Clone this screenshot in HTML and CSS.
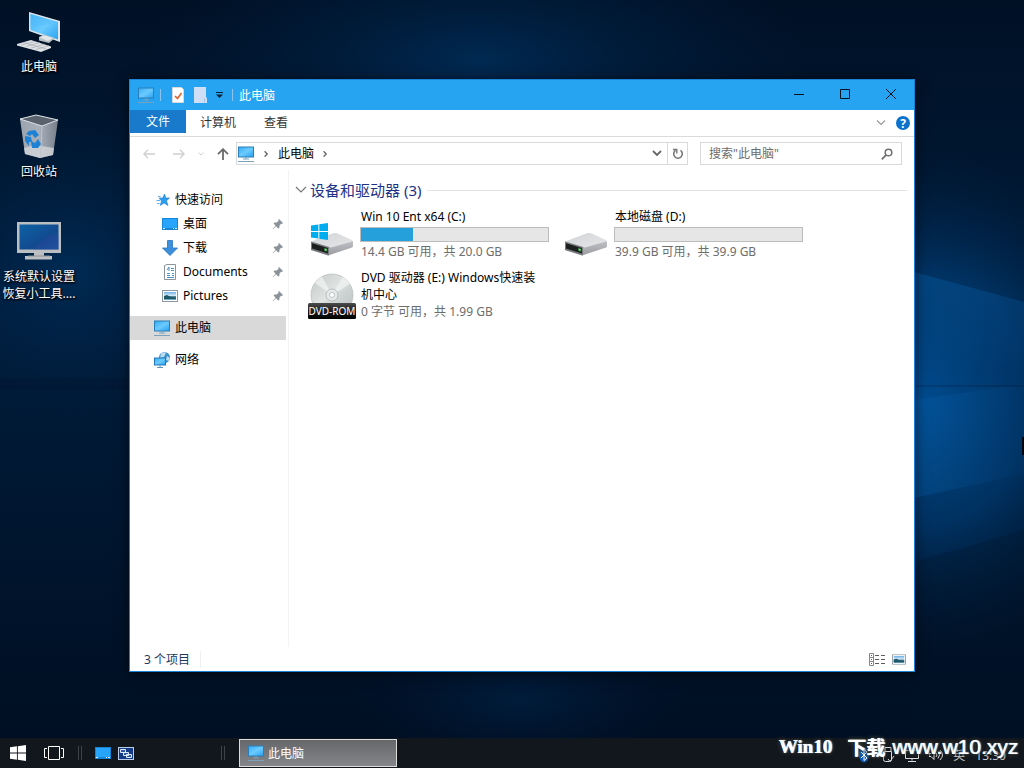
FILE: index.html
```html
<!DOCTYPE html>
<html lang="zh-CN">
<head>
<meta charset="utf-8">
<title>此电脑</title>
<link rel="stylesheet" href="styles.css">
</head>
<body>
<svg class="defs" aria-hidden="true">
  <defs>
    <linearGradient id="screen" x1="0" y1="0" x2="1" y2="1"><stop offset="0" stop-color="#37b0f6"/><stop offset=".5" stop-color="#6ccbff"/><stop offset="1" stop-color="#2ba3f0"/></linearGradient>
    <linearGradient id="dark-screen" x1="0" y1="0" x2="1" y2="1"><stop offset="0" stop-color="#0d62a6"/><stop offset=".6" stop-color="#124a8e"/><stop offset="1" stop-color="#1b5ba6"/></linearGradient>
    <linearGradient id="drive-top" x1="0" y1="0" x2="1" y2="1"><stop offset="0" stop-color="#d2d3d6"/><stop offset="1" stop-color="#e6e7e9"/></linearGradient>
    <linearGradient id="drive-side" x1="0" y1="0" x2="0" y2="1"><stop offset="0" stop-color="#cfd0d4"/><stop offset="1" stop-color="#9b9ca1"/></linearGradient>
    <linearGradient id="disc" x1="0" y1="0" x2="1" y2="1"><stop offset="0" stop-color="#c3c8c8"/><stop offset=".45" stop-color="#dfe4e2"/><stop offset=".6" stop-color="#cfd4d4"/><stop offset="1" stop-color="#b9bebf"/></linearGradient>
    <linearGradient id="badge" x1="0" y1="0" x2="0" y2="1"><stop offset="0" stop-color="#4b4b4b"/><stop offset=".5" stop-color="#1c1c1c"/><stop offset="1" stop-color="#000"/></linearGradient>
    <linearGradient id="bin" x1="0" y1="0" x2="1" y2="0"><stop offset="0" stop-color="#9aa3ae"/><stop offset=".5" stop-color="#a9b0ba"/><stop offset="1" stop-color="#767f8b"/></linearGradient>
    <linearGradient id="photo" x1="0" y1="0" x2="0" y2="1"><stop offset="0" stop-color="#6fb0e8"/><stop offset=".45" stop-color="#d5eaf8"/><stop offset=".6" stop-color="#2d6272"/><stop offset="1" stop-color="#7bb3cf"/></linearGradient>
  </defs>
  <symbol id="pc" viewBox="0 0 18 18">
    <rect x="1" y="1.500" width="16" height="11" fill="#2a7db8"/><rect x="2" y="2.500" width="14" height="9" fill="url(#screen)"/>
    <path d="M6 14h6M1 16.500h16" stroke="#7ba1bd" stroke-width="1"/><path d="M8 12.500h2v1H8z" fill="#7ba1bd"/>
  </symbol>
  <symbol id="desk" viewBox="0 0 16 12">
    <rect width="16" height="12" fill="#1684d8"/><rect x="1" y="1" width="14" height="9" fill="#27a4fb"/><path d="M1 10.500h2M11 10.500h1M13 10.500h2" stroke="#d8efff"/>
  </symbol>
  <symbol id="pin" viewBox="0 0 12 12">
    <path d="M7 1l4 4-1 1-.8-.2L7.500 7.600 7.300 10 6.300 10.600 4 8.300 1 11.200.6 11 3.600 7.700 1.600 5.500l.8-.9 2.300-.1L6.600 2.700 6.300 1.700z" fill="#8b9299"/>
  </symbol>
  <symbol id="photo-icon" viewBox="0 0 16 12">
    <rect x=".5" y=".5" width="15" height="11" fill="#fff" stroke="#8d979e"/><rect x="2" y="2" width="12" height="8" fill="url(#photo)"/><path d="M2 6l3-1 4 2 5 1v1H2z" fill="#1f5668"/>
  </symbol>
  <symbol id="drive" viewBox="0 0 44 24">
    <path d="M1 10L26 3l16 6q1 0 1 1v4q0 1-1 1.500L21 22.500 18 23.500 1 18z" fill="url(#drive-side)"/>
    <path d="M1 9.500L23 1.300q2-.7 4 0l15 6.700q1 .7 0 1.500L21 15.500l-2-.5z" fill="url(#drive-top)"/>
    <path d="M1 9.500l18 5.500v8.500L1 18z" fill="#77797c"/>
    <path d="M2 11.300l16 4.700v5.500L2 16.500z" fill="#1b1f1d"/>
    <path d="M14 15.800l3.500 1v3l-3.500-1z" fill="#2f7a3b"/><rect x="15" y="17" width="1.500" height="1.500" fill="#8de88e"/>
  </symbol>
  <symbol id="logo" viewBox="0 0 18 18">
    <path d="M0 2.600L7.800 1.500v7H0zM8.800 1.300L18 0v8.500H8.800zM0 9.500h7.800v7L0 15.400zM8.800 9.500H18V18l-9.200-1.300z"/>
  </symbol>
</svg>

<div class="screen">
  <main class="desktop">
    <svg class="wallpaper" viewBox="0 0 1024 738" preserveAspectRatio="none" aria-hidden="true">
      <defs>
        <radialGradient id="w-right" cx=".5" cy=".5" r=".5"><stop offset="0" stop-color="#004c90"/><stop offset=".5" stop-color="#003b72" stop-opacity=".75"/><stop offset="1" stop-color="#002044" stop-opacity="0"/></radialGradient>
        <radialGradient id="w-soft" cx=".5" cy=".5" r=".5"><stop offset="0" stop-color="#002f5c" stop-opacity=".8"/><stop offset="1" stop-color="#001c3c" stop-opacity="0"/></radialGradient>
        <linearGradient id="w-base" x1="0" y1="0" x2="0" y2="1"><stop offset="0" stop-color="#001126"/><stop offset=".45" stop-color="#001c3a"/><stop offset="1" stop-color="#000f23"/></linearGradient>
        <linearGradient id="w-beam" x1="0" y1="0" x2="1" y2="0"><stop offset="0" stop-color="#0a63b0" stop-opacity=".3"/><stop offset="1" stop-color="#0a63b0" stop-opacity=".03"/></linearGradient>
        <linearGradient id="w-fade" x1="0" y1="0" x2="0" y2="1"><stop offset="0" stop-color="#0a63b0" stop-opacity=".35"/><stop offset="1" stop-color="#0a63b0" stop-opacity="0"/></linearGradient>
      </defs>
      <rect width="1024" height="738" fill="url(#w-base)"/>
      <ellipse cx="480" cy="60" rx="330" ry="130" fill="url(#w-soft)"/>
      <ellipse cx="70" cy="270" rx="190" ry="170" fill="url(#w-soft)"/>
      <ellipse cx="520" cy="700" rx="170" ry="70" fill="url(#w-soft)" opacity=".5"/>
      <ellipse cx="920" cy="400" rx="220" ry="250" fill="url(#w-right)"/>
      <path d="M914 272L1024 302V370H914z" fill="url(#w-fade)"/>
      <path d="M914 400L1024 384V474L914 498z" fill="url(#w-beam)"/>
      <path d="M914 562L1024 530V738H914z" fill="#001229" opacity=".25"/>
      <path d="M0 378h130v12H0zM914 385h110v2H914z" fill="#001026" opacity=".2"/>
      <rect x="1022" y="437" width="2" height="18" fill="#000510"/>
    </svg>

    <nav class="shortcuts" aria-label="桌面图标">
      <a class="shortcut" href="#">
        <svg class="shortcut-icon" viewBox="0 0 48 48" aria-hidden="true">
          <path d="M14 4l31 9v21L14 23z" fill="#dce5eb"/><path d="M15.500 6L43 14v17.500L15.500 22z" fill="url(#screen)"/><path d="M15.500 6L43 14 15.500 20z" fill="#59bdfc" opacity=".55"/>
          <path d="M24 29l6-2 10 3-6 5-10-2.500z" fill="#b9c0c5"/><path d="M24 29l6-1.500 8 2.500-5 3z" fill="#e4e7e9"/>
          <path d="M2 36L16 32l20 6.500V40l-10 4L2 37.500z" fill="#dfe2e4"/><path d="M6 37l14-3.500M11 38.500l14-4M16 40l14-4M21 41.500l13-4M8 34.500L31 41" stroke="#9da6ae" stroke-width=".6"/>
        </svg>
        <span>此电脑</span>
      </a>
      <a class="shortcut" href="#">
        <svg class="shortcut-icon" viewBox="0 0 48 48" aria-hidden="true">
          <path d="M5 6l22 7 16-6-5 35-13 3-15-4z" fill="url(#bin)"/><path d="M5 6L21 2l22 5-16 6z" fill="#59626d" stroke="#e1e5e9" stroke-width="1"/>
          <path d="M9 35l11-3 19 3-1 7-13 3-15-4z" fill="#d2d5d9" opacity=".8"/><path d="M27 13l-1.500 31" stroke="#bec5cc" stroke-width="1"/>
          <g fill="#1d82d6"><path d="M14 18l6-1 4 5-4 3-3-4-2 2-4-2z"/><path d="M10 23l6 1 1 5-3 0 0 4-4-5z"/><path d="M16 28l4 2 3-4 3 5-3 4-6 0z"/></g>
        </svg>
        <span>回收站</span>
      </a>
      <a class="shortcut" href="#">
        <svg class="shortcut-icon" viewBox="0 0 48 48" aria-hidden="true">
          <path d="M2 4h44v31H29v3h8v3.500H10V38h9v-3H2z" fill="#bcbfc2"/><rect x="4.500" y="6.500" width="39" height="25" fill="url(#dark-screen)"/><path d="M26 24l8-7 9.500 1v13.500H18z" fill="#28459a" opacity=".45"/><path d="M13 38h22" stroke="#8e9296"/>
        </svg>
        <span>系统默认设置恢复小工具....</span>
      </a>
    </nav>

    <section class="window" aria-label="此电脑">
      <header class="titlebar">
        <svg class="i18" aria-hidden="true"><use href="#pc"/></svg>
        <span class="tsep"></span>
        <button class="quick" aria-label="属性"><svg viewBox="0 0 12 16" width="12" height="16"><path d="M.5.500h9l2 2v13H.5z" fill="#fff" stroke="#d9d9dd"/><path d="M3 9l2.500 2.500L9.500 6" fill="none" stroke="#e2622f" stroke-width="1.600"/></svg></button>
        <button class="quick" aria-label="新建文件夹"><svg viewBox="0 0 14 16" width="14" height="16"><path d="M1 0h12v10.500h1V16H1z" fill="#cfdef7"/><path d="M11.500 11v4.500" stroke="#a9c4ea"/></svg></button>
        <button class="more" aria-label="自定义快速访问工具栏"><svg viewBox="0 0 7 6" width="7" height="6"><path d="M0 .500h7" stroke="#0b2135"/><path d="M0 2.500h7L3.500 6z" fill="#0b2135"/></svg></button>
        <span class="tsep"></span>
        <h1 class="title">此电脑</h1>
        <div class="controls">
          <button aria-label="最小化"><svg viewBox="0 0 10 10" width="10" height="10"><path d="M0 5.500h10"/></svg></button>
          <button aria-label="最大化"><svg viewBox="0 0 10 10" width="10" height="10"><path d="M.5.500h9v9h-9z"/></svg></button>
          <button aria-label="关闭"><svg viewBox="0 0 10 10" width="10" height="10"><path d="M0 0l10 10M10 0L0 10"/></svg></button>
        </div>
      </header>

      <div class="ribbon">
        <button class="tab active">文件</button>
        <button class="tab">计算机</button>
        <button class="tab">查看</button>
        <div class="ribbon-end">
          <button aria-label="展开功能区"><svg viewBox="0 0 10 6" width="10" height="6"><path d="M1 .500l4 4 4-4" fill="none" stroke="#9a9a9a" stroke-width="1.200"/></svg></button>
          <button class="help" aria-label="帮助">?</button>
        </div>
      </div>

      <div class="addressbar">
        <div class="history">
          <button aria-label="后退"><svg viewBox="0 0 12 10" width="12" height="10"><path d="M12 5H1M5 .700L.9 5 5 9.300" stroke="#d0d0d0" stroke-width="1.300" fill="none"/></svg></button>
          <button aria-label="前进"><svg viewBox="0 0 12 10" width="12" height="10"><path d="M0 5h11M7 .700L11.100 5 7 9.300" stroke="#d0d0d0" stroke-width="1.300" fill="none"/></svg></button>
          <button class="recent" aria-label="最近浏览的位置"><svg viewBox="0 0 6 4" width="6" height="4"><path d="M.500.500L3 3 5.500.500" stroke="#cfcfcf" fill="none"/></svg></button>
          <button aria-label="上移"><svg viewBox="0 0 12 12" width="12" height="12"><path d="M6 12V1.500M1 6.200L6 1.200l5 5" stroke="#6a6a6a" stroke-width="1.800" fill="none"/></svg></button>
        </div>
        <div class="path">
          <svg class="i18" aria-hidden="true"><use href="#pc"/></svg>
          <svg class="crumb" viewBox="0 0 4 6" width="4" height="6"><path d="M.600.300L3.200 3 .600 5.700" fill="none" stroke="#6a6a6a" stroke-width="1.400"/></svg>
          <a class="place" href="#">此电脑</a>
          <svg class="crumb" viewBox="0 0 4 6" width="4" height="6"><path d="M.600.300L3.200 3 .600 5.700" fill="none" stroke="#6a6a6a" stroke-width="1.400"/></svg>
          <button class="path-open" aria-label="以前的位置"><svg viewBox="0 0 10 7" width="10" height="7"><path d="M1 1l4 4 4-4" fill="none" stroke="#666" stroke-width="1.800"/></svg></button>
          <button class="refresh" aria-label="刷新"><svg viewBox="0 0 12 12" width="12" height="12"><path d="M8.500 2.400A4.300 4.300 0 1 1 3.500 2.400" fill="none" stroke="#777" stroke-width="1.600"/><path d="M1 1.500H4.800V5.500" fill="none" stroke="#777" stroke-width="1.400"/></svg></button>
        </div>
        <div class="search">
          <input type="text" aria-label="搜索" placeholder="搜索&quot;此电脑&quot;">
          <button aria-label="搜索"><svg viewBox="0 0 12 12" width="12" height="12"><circle cx="7.500" cy="4.500" r="3.300" fill="none" stroke="#707070" stroke-width="1.500"/><path d="M5.200 6.900L.800 11.300" stroke="#707070" stroke-width="1.800"/></svg></button>
        </div>
      </div>

      <div class="body">
        <nav class="tree" aria-label="导航窗格">
          <div class="branch">
            <a class="node" href="#"><svg class="i16" viewBox="0 0 16 16"><path d="M9.500 2l1.300 4H14.500l-3 2.700 1.500 4.800-3.900-2.500L5.200 13.500 6.500 9 4 6h3.800z" fill="#2a9df0" stroke="#1b7fcc" stroke-width=".6"/><path d="M3 4.500h2.500M1.500 8.500h3.500M2 11.500h2.500" stroke="#5bb1f0"/></svg><span>快速访问</span></a>
            <a class="node sub" href="#"><svg class="i16"><use href="#desk"/></svg><span>桌面</span><svg class="pin"><use href="#pin"/></svg></a>
            <a class="node sub" href="#"><svg class="i16" viewBox="0 0 16 16"><path d="M5.500.500h5V8h5L8 15.500.500 8h5z" fill="#3d8fdc" stroke="#2676c2" stroke-width=".8"/></svg><span>下载</span><svg class="pin"><use href="#pin"/></svg></a>
            <a class="node sub" href="#"><svg class="i16" viewBox="0 0 16 16"><path d="M2.500 1.500L5 .500h8.500v15h-11z" fill="#fff" stroke="#8b949b"/><path d="M5 6l2-3v4M9 4.500h3M9 6.500h3M5 9.500h3M10 9.500h2M5 11.500h3M10 11.500h2M5 13.500h7" fill="none" stroke="#4b91c4"/></svg><span>Documents</span><svg class="pin"><use href="#pin"/></svg></a>
            <a class="node sub" href="#"><svg class="i16"><use href="#photo-icon"/></svg><span>Pictures</span><svg class="pin"><use href="#pin"/></svg></a>
          </div>
          <a class="node current" href="#" aria-current="page"><svg class="i18"><use href="#pc"/></svg><span>此电脑</span></a>
          <a class="node" href="#"><svg class="i18" viewBox="0 0 18 18"><circle cx="11.500" cy="6.500" r="5.500" fill="#3d8fc8"/><path d="M8 2.500q3-2 5-.5l-2 4-4 1zM14 5l3 2-1 3-3-1z" fill="#b9dcf0"/><path d="M1 6.500h12v8H1z" fill="#2478b8"/><path d="M2 7.500h10v6H2z" fill="url(#screen)"/><path d="M4 16.500h6M7 14.500v2" stroke="#5f93b6"/></svg><span>网络</span></a>
        </nav>

        <div class="files">
          <h2 class="group"><svg viewBox="0 0 12 8" width="12" height="8"><path d="M1 1l5 5 5-5" fill="none" stroke="#777" stroke-width="1.200"/></svg><span>设备和驱动器 (3)</span></h2>
          <div class="drives">
            <article class="drive">
              <svg class="drive-icon" viewBox="0 0 48 50" aria-hidden="true"><use href="#drive" x="2" y="24" width="44" height="24"/><use href="#logo" x="3" y="15" width="17" height="17" fill="#00adef"/></svg>
              <div class="info">
                <h3>Win 10 Ent x64 (C:)</h3>
                <div class="meter" role="meter" aria-label="已用空间" aria-valuenow="28"><div class="used" style="width:28%"></div></div>
                <p>14.4 GB 可用，共 20.0 GB</p>
              </div>
            </article>
            <article class="drive">
              <svg class="drive-icon" viewBox="0 0 48 50" aria-hidden="true"><use href="#drive" x="2" y="24" width="44" height="24"/></svg>
              <div class="info">
                <h3>本地磁盘 (D:)</h3>
                <div class="meter" role="meter" aria-label="已用空间" aria-valuenow="0"><div class="used" style="width:0%"></div></div>
                <p>39.9 GB 可用，共 39.9 GB</p>
              </div>
            </article>
            <article class="drive">
              <svg class="drive-icon" viewBox="0 0 48 50" aria-hidden="true">
                <circle cx="24" cy="26" r="21" fill="url(#disc)" stroke="#b5babb" stroke-width=".7"/><path d="M24 26L7 14A21 21 0 0 1 14 7.500zM24 26L35 8a21 21 0 0 1 7 7z" fill="#f2f5f4" opacity=".7"/>
                <circle cx="24" cy="26" r="6" fill="#e6e9e9" stroke="#a8adad" stroke-width=".7"/><circle cx="24" cy="26" r="2.500" fill="#fff" stroke="#a8adad" stroke-width=".7"/>
                <rect x="0" y="34" width="48" height="16" rx="1.500" fill="url(#badge)"/><text class="disc-label" x="24" y="46" text-anchor="middle">DVD-ROM</text>
              </svg>
              <div class="info">
                <h3>DVD 驱动器 (E:) Windows快速装机中心</h3>
                <p>0 字节 可用，共 1.99 GB</p>
              </div>
            </article>
          </div>
        </div>
      </div>

      <footer class="status">
        <span class="count">3 个项目</span>
        <div class="views">
          <button aria-label="详细信息"><svg viewBox="0 0 16 13" width="16" height="13"><path d="M.5.500h4v12h-4zM.5 4.500h4M.5 8.500h4" fill="none" stroke="#868686"/><path d="M2 2.500h1M2 6.500h1M2 10.500h1M6 2.500h4M12 2.500h4M6 6.500h4M12 6.500h4M6 10.500h4M12 10.500h4" stroke="#5c5c5c"/></svg></button>
          <button aria-label="大图标"><svg viewBox="0 0 16 12" width="14" height="11"><use href="#photo-icon"/></svg></button>
        </div>
      </footer>
    </section>
  </main>

  <footer class="taskbar">
    <button class="start" aria-label="开始"><svg viewBox="0 0 18 18" width="16" height="16" fill="#fff"><use href="#logo"/></svg></button>
    <button class="taskview" aria-label="任务视图"><svg viewBox="0 0 20 14" width="20" height="14"><path d="M4.500.500h11v13h-11zM3 2.500H.5v9H3M17 2.500h2.500v9H17" fill="none" stroke="#fff"/></svg></button>
    <span class="grip"></span>
    <div class="launch">
      <button aria-label="显示桌面"><svg width="16" height="12"><use href="#desk"/></svg></button>
      <button aria-label="切换窗口"><svg viewBox="0 0 16 13" width="16" height="13"><rect x=".5" y=".5" width="15" height="12" fill="#123a86" stroke="#b9cdea"/><path d="M2.500 2.500h5v3h-5zM5.500 5.500h5v3h-5zM8.500 7.500h5v3h-5z" fill="#2c5aa8" stroke="#dfe9f7"/></svg></button>
    </div>
    <span class="grip"></span>
    <button class="task"><svg class="i18" aria-hidden="true"><use href="#pc"/></svg><span>此电脑</span></button>
    <div class="tray">
      <svg viewBox="0 0 14 16" width="14" height="16"><ellipse cx="7" cy="8" rx="5" ry="7.500" fill="#0d5bb5"/><path d="M4 5l6 6-3 2.500v-11L10 5l-6 6" fill="none" stroke="#fff"/></svg>
      <svg viewBox="0 0 14 16" width="14" height="16"><path d="M4 4.500V.500h6v4M2.500 4.500h8v8q0 2-2 2h-4q-2 0-2-2z" fill="none" stroke="#ddd"/><path d="M7 12l2 2.500L13 9" fill="none" stroke="#ddd"/></svg>
      <svg viewBox="0 0 14 16" width="14" height="16"><path d="M.5 3.500h13v8H.5zM7 11.500v2M3 14.500h8" fill="none" stroke="#ddd"/></svg>
      <svg viewBox="0 0 14 16" width="14" height="16"><path d="M0 6.500h2l3-3v9l-3-3H0zM7 6q2 2 0 4M9 4.500q3 3.500 0 7M11 3q5 5 0 10" fill="none" stroke="#ddd"/></svg>
      <span>英</span><time>13:30</time>
    </div>
  </footer>

  <div class="watermark"><b>Win10</b><b class="wm-cn">下载</b><span>www.w10.xyz</span></div>
</div>
</body>
</html>
```

FILE: styles.css
```css
* { box-sizing: border-box; }
body {
  margin: 0;
  font-family: "Noto Sans", "Noto Sans CJK SC", sans-serif;
  font-size: 12px;
  line-height: 17px;
  color: #000;
}
h1, h2, h3, p { margin: 0; font-size: inherit; font-weight: 400; }
a { color: inherit; text-decoration: none; }
button {
  display: flex;
  align-items: center;
  justify-content: center;
  padding: 0;
  border: 0;
  background: none;
  font: inherit;
  color: inherit;
}
svg { display: block; flex: none; }
.defs { position: absolute; width: 0; height: 0; }
.i16 { width: 16px; height: 16px; }
.i18 { width: 18px; height: 18px; }

.screen {
  position: relative;
  display: flex;
  flex-direction: column;
  height: 100vh;
  overflow: hidden;
  background: #000f23;
}
.desktop { position: relative; flex: 1; min-height: 0; }
.wallpaper { position: absolute; inset: 0; width: 100%; height: 100%; }

/* Desktop icons */
.shortcuts { position: relative; display: flex; flex-direction: column; width: 78px; padding-top: 8px; }
.shortcut {
  display: flex;
  flex-direction: column;
  align-items: center;
  gap: 2px;
  height: 105px;
  padding: 0 2px;
  color: #fff;
  text-align: center;
  text-shadow: 1px 1px 2px #000, 0 1px 2px #000;
}
.shortcut span { width: 74px; word-break: break-all; }
.shortcut-icon { width: 48px; height: 48px; }

/* Explorer window */
.window {
  position: absolute;
  inset: 79px 109px 66px 129px;
  display: flex;
  flex-direction: column;
  border: 1px solid #1883d7;
  background: #fff;
  box-shadow: 0 2px 12px rgba(0, 0, 0, .6);
}
.titlebar { display: flex; align-items: center; height: 30px; padding-left: 7px; background: #26a4f2; }
.tsep { width: 1px; height: 12px; margin: 0 6px 0 5px; background: #8dc4ea; }
.quick { width: 22px; height: 24px; }
.more { width: 16px; height: 24px; }
.title { color: #fff; }
.controls { display: flex; height: 100%; margin-left: auto; }
.controls button { width: 46px; height: 28px; }
.controls svg { fill: none; stroke: #05121d; }

.ribbon { display: flex; height: 27px; border-bottom: 1px solid #dadbdc; color: #333; }
.tab { height: 24px; padding: 0 14px; }
.tab.active { width: 56px; height: 23px; background: #1979ca; color: #fff; }
.ribbon-end { display: flex; align-items: center; gap: 10px; margin-left: auto; padding-right: 4px; }
.help { width: 14px; height: 14px; border-radius: 50%; background: #0a72cc; color: #fff; font-weight: 700; }

.addressbar { display: flex; gap: 12px; height: 33px; padding: 5px 12px 5px 0; }
.history { display: flex; align-items: center; padding-left: 13px; width: 94px; gap: 18px; }
.history .recent { margin: 0 -5px; }
.path, .search { display: flex; align-items: center; height: 23px; border: 1px solid #d9d9d9; }
.path { flex: 1; }
.crumb { margin: 0 10px 0 9px; }
.path-open { width: 20px; height: 100%; margin-left: auto; }
.refresh { width: 20px; height: 100%; border-left: 1px solid #d9d9d9; }
.search { width: 202px; }
.search input {
  flex: 1;
  min-width: 0;
  padding: 0 0 0 8px;
  border: 0;
  outline: 0;
  background: none;
  font: inherit;
}
.search input::placeholder { color: #6d6d6d; opacity: 1; }
.search button { width: 28px; height: 100%; }

.body { display: flex; flex: 1; min-height: 0; }
.tree { display: flex; flex-direction: column; gap: 8px; width: 159px; padding: 18px 2px 0 0; border-right: 1px solid #f3f3f3; }
.node { display: flex; align-items: center; gap: 4px; height: 24px; padding: 0 2px 0 23px; }
.node span { padding-bottom: 2px; }
.node > .i16 { margin-left: 2px; }
.node.sub { padding-left: 30px; gap: 5px; }
.current { background: #d9d9d9; }
.pin { width: 12px; height: 12px; margin-left: auto; }

.files { flex: 1; min-width: 0; padding: 9px 7px 0 6px; }
.group { display: flex; align-items: center; gap: 3px; color: #1e3287; font-size: 15px; line-height: 22px; }
.group::after { content: ""; flex: 1; height: 1px; margin-left: 3px; background: #e2e2e2; }
.drives {
  display: grid;
  grid-template-columns: repeat(auto-fill, 241px);
  gap: 9px 13px;
  padding: 7px 0 0 13px;
}
.drive { display: flex; gap: 4px; }
.drive-icon { width: 48px; height: 50px; }
.info { flex: 1; min-width: 0; }
.info h3, .info p { padding: 0 4px 0 1px; }
.info p { color: #6d6d6d; }
.meter { height: 15px; margin: 2px 0 1px; border: 1px solid #bcbcbc; background: #e6e6e6; }
.used { height: 100%; background: #26a0da; }
.disc-label { fill: #fff; font-size: 10px; }

.status { display: flex; align-items: center; justify-content: space-between; height: 24px; padding: 0 8px 0 14px; color: #1e395b; }
.count { padding-right: 10px; border-right: 1px solid #f0f0f0; }
.views { display: flex; gap: 7px; }

/* Taskbar */
.taskbar { position: relative; display: flex; align-items: center; height: 30px; background: #12161d; color: #fff; }
.start { width: 36px; height: 30px; }
.taskview { width: 36px; height: 30px; }
.grip { width: 4px; height: 14px; margin: 0 6px; border: solid #3f4247; border-width: 0 1px; }
.launch { display: flex; gap: 7px; width: 127px; padding-left: 7px; }
.task {
  justify-content: flex-start;
  gap: 3px;
  width: 158px;
  height: 28px;
  margin-left: 8px;
  padding-left: 7px;
  border: 1px solid #dcdcdc;
  background: linear-gradient(#66676a, #858689);
}
.tray { display: flex; align-items: center; gap: 10px; margin-left: auto; padding: 4px 18px 0 0; color: #ccc; }

.watermark {
  position: absolute;
  right: 6px;
  bottom: 8px;
  display: flex;
  align-items: center;
  color: #fff;
  font: 21px/26px "Liberation Sans", sans-serif;
  text-shadow: 1px 0 1px #fff, 0 0 2px #000, 0 0 3px #000, 0 0 4px #777a60;
}
.watermark b { margin-right: 15px; font: 700 19px/26px "Liberation Serif", serif; }
.watermark .wm-cn { margin-right: 7px; font-family: "Noto Sans CJK SC", sans-serif; }
```
